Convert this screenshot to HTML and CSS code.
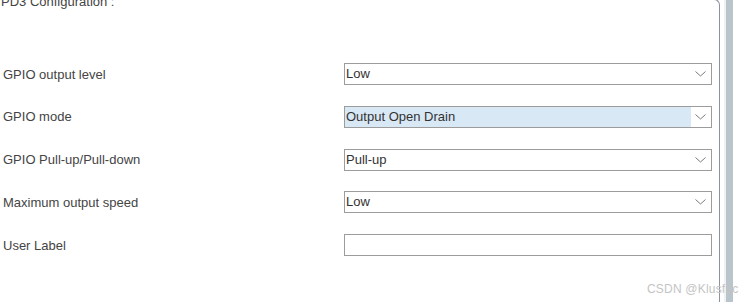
FILE: index.html
```html
<!DOCTYPE html>
<html lang="en">
<head>
    <meta charset="UTF-8">
    <title>PD3 Configuration</title>
    <link rel="stylesheet" href="styles.css">
</head>
<body>

    <div class="page">
        <fieldset class="config">
            <legend>PD3 Configuration :</legend>

            <div class="form-grid">
                <label>GPIO output level</label>
                <div class="select">
                    <span class="value">Low</span>
                    <span class="arrow"><svg width="11" height="6" viewBox="0 0 11 6"><path d="M0.5 0.5 L5.5 5 L10.5 0.5" fill="none" stroke="#7a7a7a" stroke-width="1"/></svg></span>
                </div>

                <label>GPIO mode</label>
                <div class="select active">
                    <span class="value">Output Open Drain</span>
                    <span class="arrow"><svg width="11" height="6" viewBox="0 0 11 6"><path d="M0.5 0.5 L5.5 5 L10.5 0.5" fill="none" stroke="#7a7a7a" stroke-width="1"/></svg></span>
                </div>

                <label>GPIO Pull-up/Pull-down</label>
                <div class="select">
                    <span class="value">Pull-up</span>
                    <span class="arrow"><svg width="11" height="6" viewBox="0 0 11 6"><path d="M0.5 0.5 L5.5 5 L10.5 0.5" fill="none" stroke="#7a7a7a" stroke-width="1"/></svg></span>
                </div>

                <label>Maximum output speed</label>
                <div class="select">
                    <span class="value">Low</span>
                    <span class="arrow"><svg width="11" height="6" viewBox="0 0 11 6"><path d="M0.5 0.5 L5.5 5 L10.5 0.5" fill="none" stroke="#7a7a7a" stroke-width="1"/></svg></span>
                </div>

                <label>User Label</label>
                <input type="text" class="text-input">
            </div>
        </fieldset>

        <div class="scroll-track"><div class="scroll-thumb"></div></div>
    </div>

    <div class="watermark">CSDN @Klusfac</div>

</body>
</html>
```

FILE: styles.css
```css
body {
    margin: 0;
    background: white;
    font-family: Arial, "Liberation Sans", sans-serif;
    font-size: 13px;
    color: #444;
    overflow: hidden;
}
.page {
    display: flex;
    height: 320px;
    margin-top: -10px;
}
.config {
    width: 712px;
    margin: 0;
    padding: 0 7px 0 0;
    border: 1px solid #8d9499;
    border-left: none;
    border-bottom: none;
    border-top-right-radius: 6px;
}
.config legend {
    padding: 4px 4px 0 1px;
    margin-left: 0;
    line-height: 15px;
    color: #444;
}
.form-grid {
    display: grid;
    grid-template-columns: 341px 1fr;
    grid-auto-rows: 22px;
    row-gap: 20.75px;
    align-items: center;
    padding: 54px 0 0 3px;
}
.form-grid label {
    color: #444;
}
.select {
    display: flex;
    height: 22px;
    box-sizing: border-box;
    border: 1px solid #9c9c9c;
    background: white;
    color: #333;
}
.select .value {
    flex: 1;
    padding-left: 1px;
    line-height: 20px;
}
.select.active .value {
    background: #d9e8f5;
}
.select .arrow {
    width: 19px;
    display: flex;
    align-items: center;
    justify-content: center;
    padding-right: 1px;
}
.text-input {
    height: 22px;
    box-sizing: border-box;
    border: 1px solid #9c9c9c;
    margin: 0;
    padding: 0 2px;
    font: inherit;
}
.scroll-track {
    margin-left: 4px;
    width: 9px;
    background: #eff1f2;
    display: flex;
    justify-content: flex-end;
}
.scroll-thumb {
    width: 7px;
    background: #b9c5cb;
}
.watermark {
    position: absolute;
    left: 647px;
    top: 282px;
    font-size: 12px;
    color: #c4c4c4;
    letter-spacing: 0.2px;
}
```
